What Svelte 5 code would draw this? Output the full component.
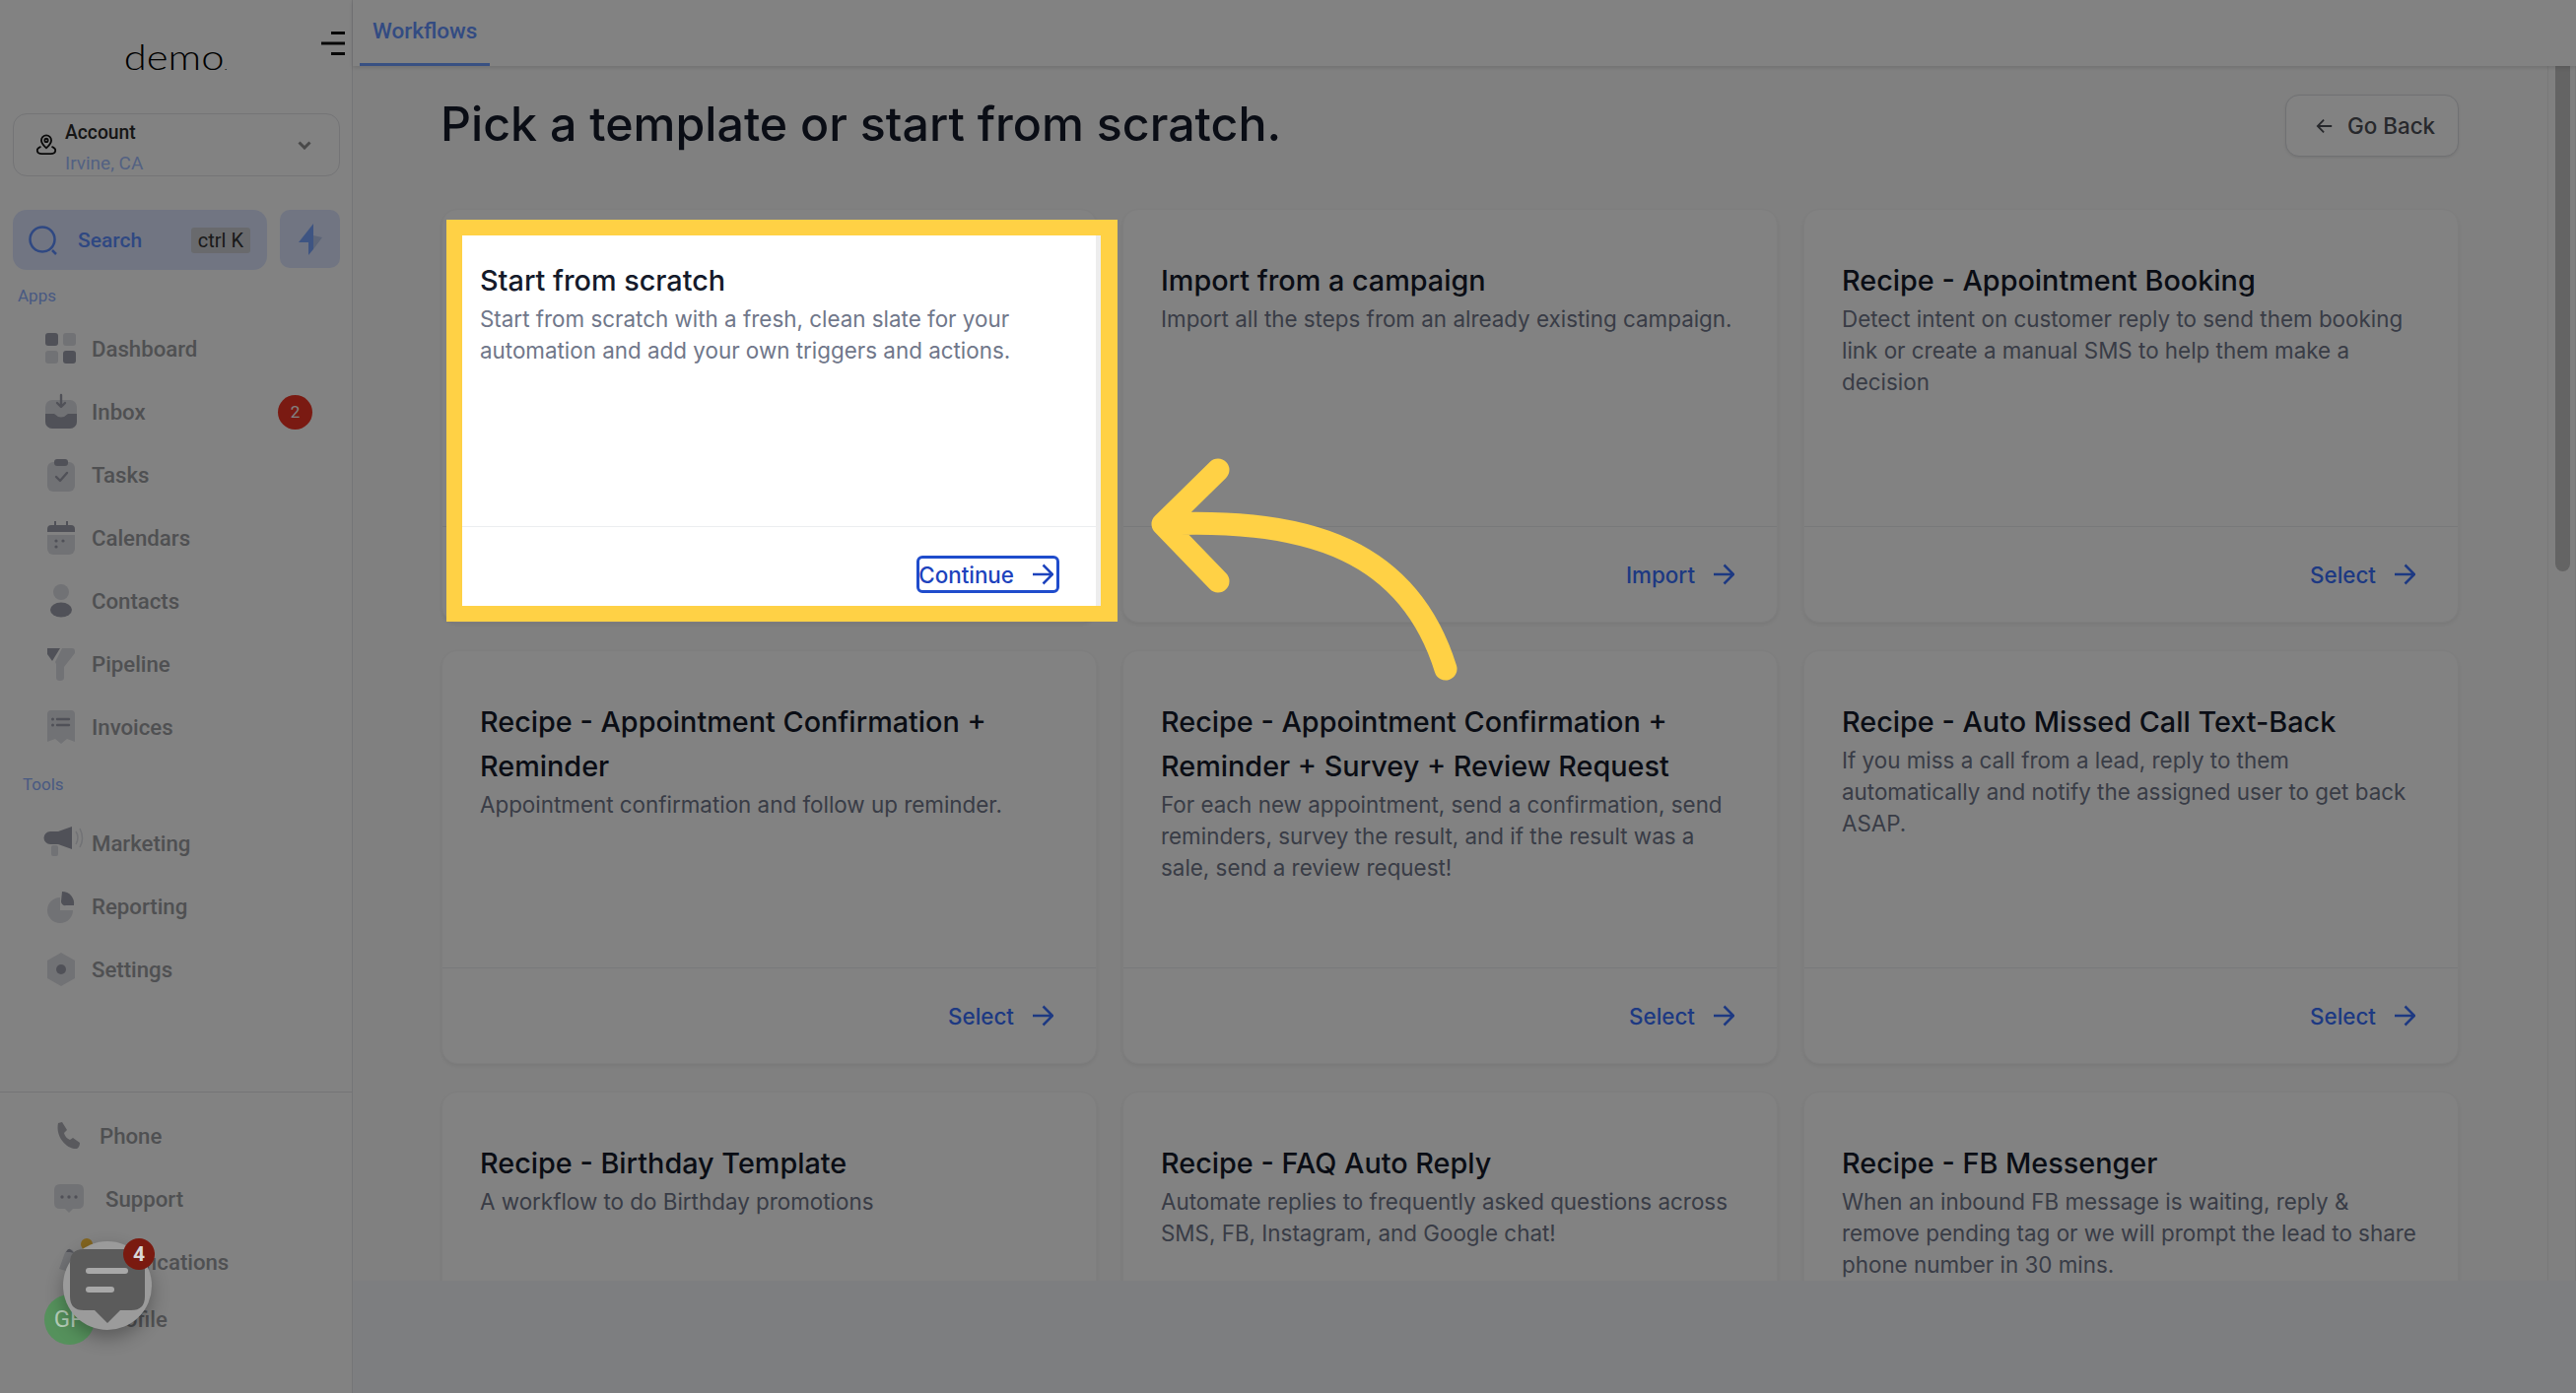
<script>
  // Sidebar items; icon bodies are drawn on a 34x34 box, .d = dark tone, .l = light tone
  const apps = [
    { label: 'Dashboard', icon: '<rect class="d" x="1" y="1" width="13" height="13" rx="3"/><rect class="l" x="19" y="1" width="13" height="13" rx="3"/><rect class="l" x="1" y="19" width="13" height="13" rx="3"/><rect class="d" x="19" y="19" width="13" height="13" rx="3"/>' },
    { label: 'Inbox', badge: 2, icon: '<rect class="l" x="1" y="5" width="32" height="29" rx="7"/><path class="d" d="M1 19h9q7 7 14 0h9v8a7 7 0 0 1-7 7H8a7 7 0 0 1-7-7z"/><path class="s" d="M17 0v11M13 8l4 4 4-4"/>' },
    { label: 'Tasks', icon: '<rect class="l" x="3" y="4" width="28" height="30" rx="6"/><rect class="d" x="10" y="1" width="14" height="7" rx="3"/><path class="s" d="M12 19l4 4 7-8"/>' },
    { label: 'Calendars', icon: '<path class="d" d="M3 11V8a4 4 0 0 1 4-4h3V0h2v4h10V0h2v4h3a4 4 0 0 1 4 4v3z"/><path class="l" d="M3 14h28v14a6 6 0 0 1-6 6H9a6 6 0 0 1-6-6z"/><circle class="d" cx="12" cy="20" r="1.6"/><circle class="d" cx="19" cy="20" r="1.6"/><circle class="d" cx="12" cy="26" r="1.6"/>' },
    { label: 'Contacts', icon: '<circle class="l" cx="17" cy="8" r="8"/><ellipse class="d" cx="17" cy="26" rx="11" ry="7.5"/>' },
    { label: 'Pipeline', icon: '<path class="d" d="M3 1h13L8 14 3 7z"/><path class="l" d="M18 1h10q3 0 3 3v2L20 20v11q0 3-4 3t-4-3V17l-1-2z"/>' },
    { label: 'Invoices', icon: '<path class="l" d="M7 0h20q4 0 4 4v28l-8-3-6 5-6-5-8 3V4q0-4 4-4z"/><circle class="d" cx="8.500" cy="9" r="1.500"/><circle class="d" cx="8.500" cy="15" r="1.500"/><path class="s" d="M13 9h12M13 15h12"/>' }
  ];
  const tools = [
    { label: 'Marketing', icon: '<path class="d" d="M14 5l14-5v23l-14-5H6a6.500 6.500 0 0 1 0-13z"/><rect class="l" x="7" y="19" width="7" height="11" rx="2"/><path class="t" d="M32 5q4 6 0 13M36 2q5 10 0 19"/>' },
    { label: 'Reporting', icon: '<path class="l" d="M16 8a13 13 0 1 0 13 13H16z"/><path class="d" d="M18 2a12 12 0 0 1 12 14H22a4 4 0 0 1-5-4z"/>' },
    { label: 'Settings', icon: '<path class="l" d="M17 0l14 8v18l-14 8-14-8V8z"/><circle class="d" cx="17" cy="17" r="5"/>' }
  ];
  const cards = [
    { title: 'Start from scratch', text: 'Start from scratch with a fresh, clean slate for your automation and add your own triggers and actions.', action: 'Continue', focused: true },
    { title: 'Import from a campaign', text: 'Import all the steps from an already existing campaign.', action: 'Import' },
    { title: 'Recipe - Appointment Booking', text: 'Detect intent on customer reply to send them booking link or create a manual SMS to help them make a decision', action: 'Select' },
    { title: 'Recipe - Appointment Confirmation + Reminder', text: 'Appointment confirmation and follow up reminder.', action: 'Select' },
    { title: 'Recipe - Appointment Confirmation + Reminder + Survey + Review Request', text: 'For each new appointment, send a confirmation, send reminders, survey the result, and if the result was a sale, send a review request!', action: 'Select' },
    { title: 'Recipe - Auto Missed Call Text-Back', text: 'If you miss a call from a lead, reply to them automatically and notify the assigned user to get back ASAP.', action: 'Select' },
    // last row runs under the fold, its footer is never seen
    { title: 'Recipe - Birthday Template', text: 'A workflow to do Birthday promotions' },
    { title: 'Recipe - FAQ Auto Reply', text: 'Automate replies to frequently asked questions across SMS, FB, Instagram, and Google chat!' },
    { title: 'Recipe - FB Messenger', text: 'When an inbound FB message is waiting, reply & remove pending tag or we will prompt the lead to share phone number in 30 mins.' }
  ];
</script>

{#snippet navItem(item)}
  <div class="nav-item">
    <svg class="nav-icon" viewBox="0 0 34 34">{@html item.icon}</svg>
    <span>{item.label}</span>
    {#if item.badge}<b class="badge">{item.badge}</b>{/if}
  </div>
{/snippet}

<div class="page">
  <aside class="sidebar">
    <div class="brand">
      <span class="logo">demo<small>.</small></span>
      <svg class="menu" viewBox="0 0 24 24"><path d="M10 1.500h14M0 12h24M10 22.500h14" /></svg>
    </div>

    <div class="account">
      <svg class="pin" viewBox="0 0 24 24">
        <path d="M12 15.500c-3-3-5.500-5-5.500-8.500a5.500 5.500 0 0 1 11 0c0 3.500-2.500 5.500-5.500 8.500z" />
        <circle cx="12" cy="7" r="1.800" />
        <path d="M6 14c-6 2-5 8 1 8h10c6 0 7-6 1-8" />
      </svg>
      <div class="account-text">
        <strong>Account</strong>
        <span>Irvine, CA</span>
      </div>
      <svg class="chevron" viewBox="0 0 14 9"><path d="M1.500 1.500L7 7l5.500-5.500" /></svg>
    </div>

    <div class="search-row">
      <div class="search">
        <svg class="search-icon" viewBox="0 0 30 30"><circle cx="14" cy="14" r="12.500" /><path d="M24 25l4 4" /></svg>
        <span>Search</span>
        <kbd>ctrl K</kbd>
      </div>
      <div class="bolt">
        <svg viewBox="0 0 24 32">
          <path fill="#7ba6ff" d="M15 0L0 19h10v13l5-6z" />
          <path fill="#b6c6ec" d="M15 0v12l9 2-9 12z" />
        </svg>
      </div>
    </div>

    <div class="group-label apps">Apps</div>
    {#each apps as item}{@render navItem(item)}{/each}

    <div class="group-label tools">Tools</div>
    {#each tools as item}{@render navItem(item)}{/each}

    <div class="sidebar-foot">
      <div class="foot-item phone">
        <svg viewBox="0 0 26 26"><path class="m" d="M3 0l4-1 5 8-3 3q1 5 6 7l3-2 7 5q0 4-3 6C12 27 0 14 3 0z" /></svg>
        <span>Phone</span>
      </div>
      <div class="foot-item support">
        <svg viewBox="0 0 30 30"><path class="l" d="M6 0h18q6 0 6 6v13q0 6-6 6h-5l-4 4-4-4H6q-6 0-6-6V6q0-6 6-6z" /><circle class="d" cx="8" cy="13" r="1.700" /><circle class="d" cx="15" cy="13" r="1.700" /><circle class="d" cx="22" cy="13" r="1.700" /></svg>
        <span>Support</span>
      </div>
      <div class="foot-item notify">
        <svg viewBox="0 0 36 30"><path class="l" d="M2 22L7 8q2-6 6-6t5 6l-2 18z" /><path class="d" d="M9 5q2-4 4-3t4 4l-4-1z" /><circle fill="#ffc53d" cx="30" cy="-3" r="6" /></svg>
        <span>Notifications</span>
      </div>
      <div class="foot-item profile">
        <i class="avatar">GP</i>
        <span>Profile</span>
      </div>
    </div>
  </aside>

  <main class="main">
    <nav class="topbar"><a class="tab">Workflows</a></nav>

    <div class="middle">
      <div class="scroll-body">
        <header class="page-head">
          <h1>Pick a template or start from scratch.</h1>
          <button class="back">
            <svg viewBox="0 0 20 20"><path d="M18 10H2M9 3l-7 7 7 7" /></svg>
            Go Back
          </button>
        </header>

        <section class="grid">
          {#each cards as card}
            <article class="card">
              <div class="card-body">
                <h2>{card.title}</h2>
                <p>{card.text}</p>
              </div>
              <div class="card-foot">
                {#if card.action}
                  <span class="action" class:focused={card.focused}>
                    {card.action}
                    <svg viewBox="0 0 22 22"><path d="M1 11h19M11.500 1.500L21 11l-9.500 9.500" /></svg>
                  </span>
                {/if}
              </div>
            </article>
          {/each}
        </section>
      </div>
      <div class="scrollbar"><div class="thumb"></div></div>
    </div>

    <div class="strip"></div>
  </main>

  <!-- tour overlay: dimmed page with a cut-out on the first card -->
  <div class="spotlight"></div>
  <svg class="tour-arrow" viewBox="0 0 360 260">
    <path d="M317 239C280 120 180 85 30 92M86 37L30 92L86 150" />
  </svg>

  <div class="chat">
    <svg viewBox="0 0 76 76">
      <path d="M14 0h48q14 0 14 14v34q0 14-14 14H51L38 75 25 62H14Q0 62 0 48V14Q0 0 14 0z" />
      <rect x="16" y="19" width="43" height="6" rx="3" />
      <rect x="16" y="38" width="29" height="6" rx="3" />
    </svg>
    <b>4</b>
  </div>
</div>

<style>
  :global(body) {
    margin: 0;
  }

  .page {
    position: relative;
    display: flex;
    width: 2614px;
    height: 1414px;
    overflow: hidden;
    background: #fff;
    font-family: Inter, "Liberation Sans", sans-serif;
  }

  /* Sidebar */
  .sidebar {
    display: flex;
    flex-direction: column;
    flex: none;
    box-sizing: border-box;
    width: 358px;
    height: 100%;
    border-right: 1px solid #e4e5e9;
    background: #ffffff;
    font-family: Roboto, "Liberation Sans", sans-serif;
  }

  .brand {
    position: relative;
    display: flex;
    justify-content: center;
    height: 115px;
    padding: 35px 0 0 5px;
    box-sizing: border-box;
  }

  .logo {
    font-family: Lato, sans-serif;
    font-weight: 300;
    font-size: 36px;
    line-height: 44px;
    color: #000;
    transform: scaleX(1.16);
    margin-right: 6px;
  }

  .logo small {
    font-size: 12px;
  }

  .menu {
    position: absolute;
    left: 326px;
    top: 32px;
    width: 24px;
    height: 24px;
    fill: none;
    stroke: #111;
    stroke-width: 3;
  }

  .account {
    display: flex;
    align-items: center;
    box-sizing: border-box;
    height: 64px;
    margin: 0 12px 0 13px;
    padding: 0 30px 0 22px;
    border: 1px solid #e3e4e8;
    border-radius: 14px;
    line-height: 1;
  }

  .pin {
    flex: none;
    width: 22px;
    height: 22px;
    fill: none;
    stroke: #151515;
    stroke-width: 2;
  }

  .account-text {
    display: flex;
    flex-direction: column;
    flex: 1;
    gap: 12px;
    margin-left: 8px;
    padding-top: 6px;
  }

  .account-text strong {
    font-size: 19.300px;
    font-weight: 500;
    color: #2c2c2c;
  }

  .account-text span {
    font-size: 19px;
    color: #a4bfff;
  }

  .chevron {
    width: 14px;
    height: 9px;
    margin-right: -2px;
    fill: none;
    stroke: #8f8f8f;
    stroke-width: 3;
  }

  .search-row {
    display: flex;
    align-items: flex-start;
    gap: 13px;
    margin: 34px 12px 0 13px;
  }

  .search {
    display: flex;
    align-items: center;
    box-sizing: border-box;
    width: 258px;
    height: 61px;
    padding: 0 17px 0 16px;
    border-radius: 14px;
    background: #dde6ff;
    font-size: 21px;
    font-weight: 500;
    color: #5d8eff;
  }

  .search-icon {
    width: 30px;
    height: 30px;
    fill: none;
    stroke: #5d8eff;
    stroke-width: 2.500;
  }

  .search span {
    flex: 1;
    margin-left: 20px;
  }

  kbd {
    display: block;
    padding: 4px 7px;
    border-radius: 3px;
    background: #cfd1d6;
    font-family: Roboto, sans-serif;
    font-size: 20px;
    line-height: 18px;
    font-weight: 400;
    color: #333;
  }

  .bolt {
    display: flex;
    align-items: center;
    justify-content: center;
    width: 61px;
    height: 59px;
    border-radius: 10px;
    background: #dde6ff;
  }

  .bolt svg {
    width: 24px;
    height: 32px;
  }

  .group-label {
    font-size: 17px;
    line-height: 20px;
    color: #90b0ff;
  }

  .apps {
    margin: 16px 0 12px 18px;
  }

  .tools {
    margin: 16px 0 18px 23px;
  }

  .nav-item {
    display: flex;
    align-items: center;
    flex: none;
    height: 64px;
    padding-left: 45px;
    font-size: 22.200px;
    font-weight: 500;
    color: #9c9da2;
  }

  .nav-icon {
    flex: none;
    width: 34px;
    height: 34px;
    margin-right: 14px;
    overflow: visible;
  }

  .badge {
    position: absolute;
    left: 282px;
    width: 35px;
    line-height: 35px;
    border-radius: 50%;
    background: #f03424;
    font-size: 17px;
    font-weight: 400;
    text-align: center;
    color: #fff;
  }

  .sidebar :global(.d) {
    fill: #9ea0ac;
  }

  .sidebar :global(.m) {
    fill: #aeafb6;
  }

  .sidebar :global(.l) {
    fill: #dedfe5;
  }

  .sidebar :global(.s) {
    fill: none;
    stroke: #9ea0ac;
    stroke-width: 2.400;
    stroke-linecap: round;
    stroke-linejoin: round;
  }

  .sidebar :global(.t) {
    fill: none;
    stroke: #dedfe5;
    stroke-width: 1.500;
  }

  .sidebar-foot {
    margin-top: auto;
    padding: 12px 0 49px;
    border-top: 1px solid #e4e5e9;
  }

  .foot-item {
    display: flex;
    align-items: center;
    height: 64px;
    font-size: 22.200px;
    font-weight: 500;
    color: #9c9da2;
  }

  .foot-item svg {
    flex: none;
    overflow: visible;
  }

  .phone {
    padding-left: 56px;
  }

  .phone svg {
    width: 26px;
    height: 26px;
    margin-right: 19px;
  }

  .support {
    padding-left: 55px;
  }

  .support svg {
    width: 30px;
    height: 30px;
    margin-right: 22px;
  }

  .notify {
    padding-left: 58px;
  }

  .notify svg {
    width: 36px;
    height: 30px;
    margin-right: 11px;
  }

  .profile {
    height: 52px;
    padding-left: 45px;
  }

  .avatar {
    position: relative;
    z-index: 3;
    flex: none;
    width: 51px;
    height: 51px;
    margin-right: 9px;
    border-radius: 50%;
    background: #55915c;
    font-style: normal;
    font-weight: 400;
    font-size: 24px;
    line-height: 51px;
    text-align: center;
    color: #b5cdb8;
  }

  /* Main column */
  .main {
    display: flex;
    flex-direction: column;
    flex: 1;
    min-width: 0;
    background: #fcfcfc;
  }

  .topbar {
    position: relative;
    z-index: 1;
    flex: none;
    box-sizing: border-box;
    height: 67px;
    padding-left: 7px;
    background: #fff;
    box-shadow: 0 2px 4px rgba(0, 0, 0, 0.12);
  }

  .tab {
    display: inline-block;
    box-sizing: border-box;
    height: 67px;
    padding: 15px 13px 0;
    border-bottom: 3px solid #6f9dff;
    font-family: Roboto, sans-serif;
    font-size: 22.500px;
    line-height: 32px;
    font-weight: 500;
    color: #6494ff;
  }

  .middle {
    display: flex;
    flex: none;
    height: 1233px;
    overflow: hidden;
  }

  .scroll-body {
    flex: 1;
    box-sizing: border-box;
    padding: 29px 90px 0;
  }

  .page-head {
    display: flex;
    align-items: center;
    justify-content: space-between;
    height: 63px;
    margin-bottom: 53px;
  }

  h1 {
    margin: -4px 0 0 -1px;
    font-size: 48.300px;
    line-height: 60px;
    font-weight: 500;
    color: #141a2a;
  }

  .back {
    display: flex;
    align-items: center;
    gap: 14px;
    box-sizing: border-box;
    width: 176px;
    height: 63px;
    padding: 0 0 0 30px;
    border: 1px solid #dcdde2;
    border-radius: 14px;
    background: #fff;
    box-shadow: 0 1px 3px rgba(0, 0, 0, 0.1);
    font-family: inherit;
    font-size: 22.400px;
    font-weight: 500;
    color: #4d4f56;
  }

  .back svg {
    width: 18px;
    height: 18px;
    fill: none;
    stroke: #4d4f56;
    stroke-width: 2;
  }

  .grid {
    display: grid;
    grid-template-columns: repeat(3, 1fr);
    grid-auto-rows: 420px;
    gap: 28px 26px;
  }

  .card {
    display: flex;
    flex-direction: column;
    border: 1px solid #f7f7f8;
    border-radius: 16px;
    background: #fff;
    box-shadow: 0 2px 4px rgba(0, 0, 0, 0.07);
  }

  .card-body {
    flex: none;
    box-sizing: border-box;
    height: 322px;
    padding: 50px 38px 0;
    border-bottom: 1px solid #eceef0;
  }

  h2 {
    margin: 0;
    font-size: 28.800px;
    line-height: 44.800px;
    font-weight: 500;
    color: #141a2a;
  }

  .card-body p {
    margin: 0;
    font-size: 22.400px;
    line-height: 32px;
    color: #70778a;
  }

  .card-foot {
    display: flex;
    align-items: center;
    justify-content: flex-end;
    flex: 1;
    padding-right: 39px;
  }

  .action {
    display: flex;
    align-items: center;
    gap: 18px;
    box-sizing: border-box;
    height: 34px;
    padding-right: 4px;
    font-size: 22.400px;
    font-weight: 500;
    color: #3a70ff;
  }

  .action svg {
    width: 22px;
    height: 22px;
    fill: none;
    stroke: #3a70ff;
    stroke-width: 2.500;
  }

  .action.focused {
    border-radius: 4px;
    outline: 3px solid #1f4ccc;
    outline-offset: -1px;
    color: #1d43bd;
  }

  .action.focused svg {
    stroke: #1d43bd;
  }

  .scrollbar {
    flex: none;
    box-sizing: border-box;
    width: 29px;
    padding-left: 7px;
    border-left: 1px solid #ededed;
    border-right: 1px solid #ededed;
  }

  .thumb {
    width: 15px;
    height: 513px;
    border-radius: 0 0 8px 8px;
    background: #c4c4c4;
  }

  .strip {
    flex: 1;
    background: #f6f8fc;
  }

  /* Tour overlay */
  .spotlight {
    position: absolute;
    z-index: 2;
    left: 453px;
    top: 223px;
    box-sizing: border-box;
    width: 681px;
    height: 408px;
    border: solid #ffd145;
    border-width: 16px 17px 16px 16px;
    box-shadow: 0 0 0 3000px rgba(0, 0, 0, 0.49), inset -5px 0 0 #ededed;
  }

  .tour-arrow {
    position: absolute;
    z-index: 3;
    left: 1150px;
    top: 440px;
    width: 360px;
    height: 260px;
    fill: none;
    stroke: #ffd145;
    stroke-width: 23;
    stroke-linecap: round;
    stroke-linejoin: round;
  }

  .chat {
    position: absolute;
    z-index: 4;
    left: 64px;
    top: 1260px;
    width: 90px;
    height: 90px;
    border-radius: 50%;
    background: #9b9b9b;
    box-shadow: 0 8px 18px rgba(0, 0, 0, 0.3);
  }

  .chat svg {
    position: absolute;
    left: 7px;
    top: 8px;
    width: 76px;
    height: 76px;
    fill: #5b5b5b;
  }

  .chat rect {
    fill: #a8a8a8;
  }

  .chat b {
    position: absolute;
    left: 61px;
    top: -3px;
    width: 32px;
    height: 32px;
    border-radius: 50%;
    background: #7a1a10;
    font-family: Roboto, sans-serif;
    font-size: 21px;
    line-height: 32px;
    text-align: center;
    color: #d8d8d8;
  }
</style>
